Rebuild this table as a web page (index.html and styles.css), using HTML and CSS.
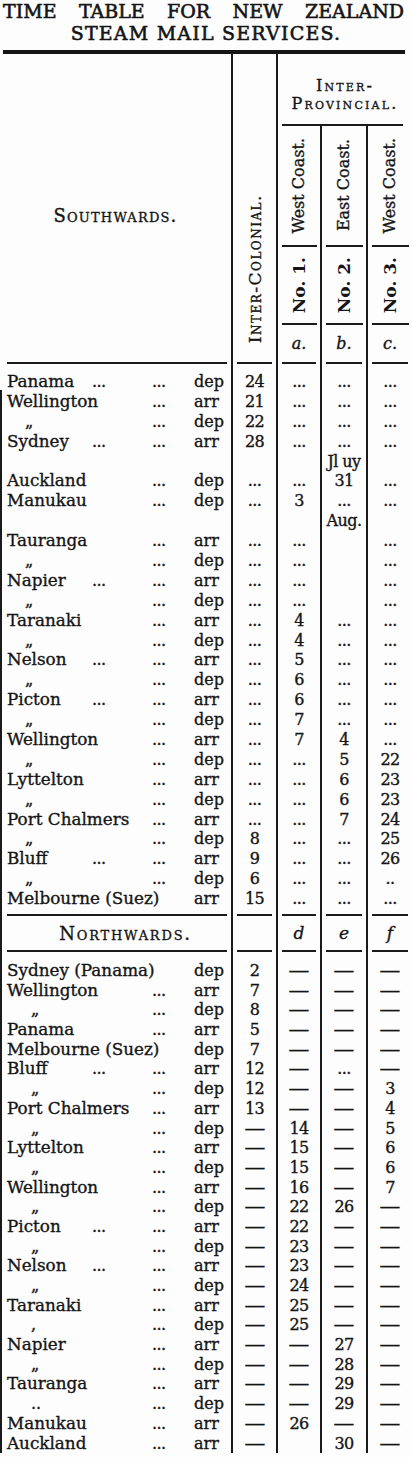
FILE: index.html
```html
<!DOCTYPE html>
<html lang="en">
<head>
<meta charset="utf-8">
<title>Time Table for New Zealand Steam Mail Services</title>
<link rel="stylesheet" href="styles.css">
</head>
<body>
<div class="page">
  <div class="title">
    <div class="title-l1"><span>TIME</span><span>TABLE</span><span>FOR</span><span>NEW</span><span>ZEALAND</span></div>
    <div class="title-l2">STEAM MAIL SERVICES.</div>
  </div>
  <div class="rule-thick"></div>

  <div class="thead">
    <div class="th-names"><span class="sc south">Southwards.</span></div>
    <div class="th-ic"><span class="vert sc ic">Inter-Colonial.</span></div>
    <div class="th-group sc"><span>Inter-</span><span>Provincial.</span></div>
    <div class="th-grule"><i class="hr"></i></div>
    <div class="th-cell c3 r3"><span class="vert coast">West Coast.</span></div>
    <div class="th-cell c4 r3"><span class="vert coast">East Coast.</span></div>
    <div class="th-cell c5 r3"><span class="vert coast">West Coast.</span></div>
    <div class="th-cell c3 r4"><i class="hr"></i></div>
    <div class="th-cell c4 r4"><i class="hr"></i></div>
    <div class="th-cell c5 r4"><i class="hr"></i></div>
    <div class="th-cell c3 r5"><span class="vert no">No. 1.</span></div>
    <div class="th-cell c4 r5"><span class="vert no">No. 2.</span></div>
    <div class="th-cell c5 r5"><span class="vert no">No. 3.</span></div>
    <div class="th-cell c3 r6"><i class="hr"></i></div>
    <div class="th-cell c4 r6"><i class="hr"></i></div>
    <div class="th-cell c5 r6"><i class="hr"></i></div>
    <div class="th-cell c3 r7 it">a.</div>
    <div class="th-cell c4 r7 it">b.</div>
    <div class="th-cell c5 r7 it">c.</div>
  </div>

  <div class="tbody">
    <div class="rule"><i></i><i></i><i></i><i></i><i></i></div>

    <div class="sec sec-south">
      <div class="r"><div class="n">Panama</div><div class="d2">...</div><div class="d3">...</div><div class="dir">dep</div><div class="c">24</div><div class="c">...</div><div class="c">...</div><div class="c">...</div></div>
      <div class="r"><div class="n">Wellington</div><div class="d2"></div><div class="d3">...</div><div class="dir">arr</div><div class="c">21</div><div class="c">...</div><div class="c">...</div><div class="c">...</div></div>
      <div class="r"><div class="n"><span class="ditto">„</span></div><div class="d2"></div><div class="d3">...</div><div class="dir">dep</div><div class="c">22</div><div class="c">...</div><div class="c">...</div><div class="c">...</div></div>
      <div class="r"><div class="n">Sydney</div><div class="d2">...</div><div class="d3">...</div><div class="dir">arr</div><div class="c">28</div><div class="c">...</div><div class="c">...</div><div class="c">...</div></div>
      <div class="r"><div class="n"></div><div class="d2"></div><div class="d3"></div><div class="dir"></div><div class="c"></div><div class="c"></div><div class="c">Jl uy</div><div class="c"></div></div>
      <div class="r"><div class="n">Auckland</div><div class="d2"></div><div class="d3">...</div><div class="dir">dep</div><div class="c">...</div><div class="c">...</div><div class="c">31</div><div class="c">...</div></div>
      <div class="r"><div class="n">Manukau</div><div class="d2"></div><div class="d3">...</div><div class="dir">dep</div><div class="c">...</div><div class="c">3</div><div class="c">...</div><div class="c">...</div></div>
      <div class="r"><div class="n"></div><div class="d2"></div><div class="d3"></div><div class="dir"></div><div class="c"></div><div class="c"></div><div class="c">Aug.</div><div class="c"></div></div>
      <div class="r"><div class="n">Tauranga</div><div class="d2"></div><div class="d3">...</div><div class="dir">arr</div><div class="c">...</div><div class="c">...</div><div class="c"></div><div class="c">...</div></div>
      <div class="r"><div class="n"><span class="ditto">„</span></div><div class="d2"></div><div class="d3">...</div><div class="dir">dep</div><div class="c">...</div><div class="c">...</div><div class="c"></div><div class="c">...</div></div>
      <div class="r"><div class="n">Napier</div><div class="d2">...</div><div class="d3">...</div><div class="dir">arr</div><div class="c">...</div><div class="c">...</div><div class="c"></div><div class="c">...</div></div>
      <div class="r"><div class="n"><span class="ditto">„</span></div><div class="d2"></div><div class="d3">...</div><div class="dir">dep</div><div class="c">...</div><div class="c">...</div><div class="c"></div><div class="c">...</div></div>
      <div class="r"><div class="n">Taranaki</div><div class="d2"></div><div class="d3">...</div><div class="dir">arr</div><div class="c">...</div><div class="c">4</div><div class="c">...</div><div class="c">...</div></div>
      <div class="r"><div class="n"><span class="ditto">„</span></div><div class="d2"></div><div class="d3">...</div><div class="dir">dep</div><div class="c">...</div><div class="c">4</div><div class="c">...</div><div class="c">...</div></div>
      <div class="r"><div class="n">Nelson</div><div class="d2">...</div><div class="d3">...</div><div class="dir">arr</div><div class="c">...</div><div class="c">5</div><div class="c">...</div><div class="c">...</div></div>
      <div class="r"><div class="n"><span class="ditto">„</span></div><div class="d2"></div><div class="d3">...</div><div class="dir">dep</div><div class="c">...</div><div class="c">6</div><div class="c">...</div><div class="c">...</div></div>
      <div class="r"><div class="n">Picton</div><div class="d2">...</div><div class="d3">...</div><div class="dir">arr</div><div class="c">...</div><div class="c">6</div><div class="c">...</div><div class="c">...</div></div>
      <div class="r"><div class="n"><span class="ditto">„</span></div><div class="d2"></div><div class="d3">...</div><div class="dir">dep</div><div class="c">...</div><div class="c">7</div><div class="c">...</div><div class="c">...</div></div>
      <div class="r"><div class="n">Wellington</div><div class="d2"></div><div class="d3">...</div><div class="dir">arr</div><div class="c">...</div><div class="c">7</div><div class="c">4</div><div class="c">...</div></div>
      <div class="r"><div class="n"><span class="ditto">„</span></div><div class="d2"></div><div class="d3">...</div><div class="dir">dep</div><div class="c">...</div><div class="c">...</div><div class="c">5</div><div class="c">22</div></div>
      <div class="r"><div class="n">Lyttelton</div><div class="d2"></div><div class="d3">...</div><div class="dir">arr</div><div class="c">...</div><div class="c">...</div><div class="c">6</div><div class="c">23</div></div>
      <div class="r"><div class="n"><span class="ditto">„</span></div><div class="d2"></div><div class="d3">...</div><div class="dir">dep</div><div class="c">...</div><div class="c">...</div><div class="c">6</div><div class="c">23</div></div>
      <div class="r"><div class="n">Port Chalmers</div><div class="d2"></div><div class="d3">...</div><div class="dir">arr</div><div class="c">...</div><div class="c">...</div><div class="c">7</div><div class="c">24</div></div>
      <div class="r"><div class="n"><span class="ditto">„</span></div><div class="d2"></div><div class="d3">...</div><div class="dir">dep</div><div class="c">8</div><div class="c">...</div><div class="c">...</div><div class="c">25</div></div>
      <div class="r"><div class="n">Bluff</div><div class="d2">...</div><div class="d3">...</div><div class="dir">arr</div><div class="c">9</div><div class="c">...</div><div class="c">...</div><div class="c">26</div></div>
      <div class="r"><div class="n"><span class="ditto">„</span></div><div class="d2"></div><div class="d3">...</div><div class="dir">dep</div><div class="c">6</div><div class="c">...</div><div class="c">...</div><div class="c">..</div></div>
      <div class="r"><div class="n">Melbourne (Suez)</div><div class="d2"></div><div class="d3"></div><div class="dir">arr</div><div class="c">15</div><div class="c">...</div><div class="c">...</div><div class="c">...</div></div>
    </div>

    <div class="rule"><i></i><i></i><i></i><i></i><i></i></div>
    <div class="nh">
      <div class="nh-name"><span class="sc north">Northwards.</span></div>
      <div class="nh-c"></div>
      <div class="nh-c it">d</div>
      <div class="nh-c it">e</div>
      <div class="nh-c it">f</div>
    </div>
    <div class="rule"><i></i><i></i><i></i><i></i><i></i></div>

    <div class="sec sec-north">
      <div class="r"><div class="n">Sydney (Panama)</div><div class="d2"></div><div class="d3"></div><div class="dir">dep</div><div class="c">2</div><div class="c"><span class="dash">—</span></div><div class="c"><span class="dash">—</span></div><div class="c"><span class="dash">—</span></div></div>
      <div class="r"><div class="n">Wellington</div><div class="d2"></div><div class="d3">...</div><div class="dir">arr</div><div class="c">7</div><div class="c"><span class="dash">—</span></div><div class="c"><span class="dash">—</span></div><div class="c"><span class="dash">—</span></div></div>
      <div class="r"><div class="n"><span class="ditto dn">„</span></div><div class="d2"></div><div class="d3">...</div><div class="dir">dep</div><div class="c">8</div><div class="c"><span class="dash">—</span></div><div class="c"><span class="dash">—</span></div><div class="c"><span class="dash">—</span></div></div>
      <div class="r"><div class="n">Panama</div><div class="d2"></div><div class="d3">...</div><div class="dir">arr</div><div class="c">5</div><div class="c"><span class="dash">—</span></div><div class="c"><span class="dash">—</span></div><div class="c"><span class="dash">—</span></div></div>
      <div class="r"><div class="n">Melbourne (Suez)</div><div class="d2"></div><div class="d3"></div><div class="dir">dep</div><div class="c">7</div><div class="c"><span class="dash">—</span></div><div class="c"><span class="dash">—</span></div><div class="c"><span class="dash">—</span></div></div>
      <div class="r"><div class="n">Bluff</div><div class="d2">...</div><div class="d3">...</div><div class="dir">arr</div><div class="c">12</div><div class="c"><span class="dash">—</span></div><div class="c">...</div><div class="c"><span class="dash">—</span></div></div>
      <div class="r"><div class="n"><span class="ditto dn">„</span></div><div class="d2"></div><div class="d3">...</div><div class="dir">dep</div><div class="c">12</div><div class="c"><span class="dash">—</span></div><div class="c"><span class="dash">—</span></div><div class="c">3</div></div>
      <div class="r"><div class="n">Port Chalmers</div><div class="d2"></div><div class="d3">...</div><div class="dir">arr</div><div class="c">13</div><div class="c"><span class="dash">—</span></div><div class="c"><span class="dash">—</span></div><div class="c">4</div></div>
      <div class="r"><div class="n"><span class="ditto dn">„</span></div><div class="d2"></div><div class="d3">...</div><div class="dir">dep</div><div class="c"><span class="dash">—</span></div><div class="c">14</div><div class="c"><span class="dash">—</span></div><div class="c">5</div></div>
      <div class="r"><div class="n">Lyttelton</div><div class="d2"></div><div class="d3">...</div><div class="dir">arr</div><div class="c"><span class="dash">—</span></div><div class="c">15</div><div class="c"><span class="dash">—</span></div><div class="c">6</div></div>
      <div class="r"><div class="n"><span class="ditto dn">„</span></div><div class="d2"></div><div class="d3">...</div><div class="dir">dep</div><div class="c"><span class="dash">—</span></div><div class="c">15</div><div class="c"><span class="dash">—</span></div><div class="c">6</div></div>
      <div class="r"><div class="n">Wellington</div><div class="d2"></div><div class="d3">...</div><div class="dir">arr</div><div class="c"><span class="dash">—</span></div><div class="c">16</div><div class="c"><span class="dash">—</span></div><div class="c">7</div></div>
      <div class="r"><div class="n"><span class="ditto dn">„</span></div><div class="d2"></div><div class="d3">...</div><div class="dir">dep</div><div class="c"><span class="dash">—</span></div><div class="c">22</div><div class="c">26</div><div class="c"><span class="dash">—</span></div></div>
      <div class="r"><div class="n">Picton</div><div class="d2">...</div><div class="d3">...</div><div class="dir">arr</div><div class="c"><span class="dash">—</span></div><div class="c">22</div><div class="c"><span class="dash">—</span></div><div class="c"><span class="dash">—</span></div></div>
      <div class="r"><div class="n"><span class="ditto dn">„</span></div><div class="d2"></div><div class="d3">...</div><div class="dir">dep</div><div class="c"><span class="dash">—</span></div><div class="c">23</div><div class="c"><span class="dash">—</span></div><div class="c"><span class="dash">—</span></div></div>
      <div class="r"><div class="n">Nelson</div><div class="d2">...</div><div class="d3">...</div><div class="dir">arr</div><div class="c"><span class="dash">—</span></div><div class="c">23</div><div class="c"><span class="dash">—</span></div><div class="c"><span class="dash">—</span></div></div>
      <div class="r"><div class="n"><span class="ditto dn">„</span></div><div class="d2"></div><div class="d3">...</div><div class="dir">dep</div><div class="c"><span class="dash">—</span></div><div class="c">24</div><div class="c"><span class="dash">—</span></div><div class="c"><span class="dash">—</span></div></div>
      <div class="r"><div class="n">Taranaki</div><div class="d2"></div><div class="d3">...</div><div class="dir">arr</div><div class="c"><span class="dash">—</span></div><div class="c">25</div><div class="c"><span class="dash">—</span></div><div class="c"><span class="dash">—</span></div></div>
      <div class="r"><div class="n"><span class="ditto dn">,</span></div><div class="d2"></div><div class="d3">...</div><div class="dir">dep</div><div class="c"><span class="dash">—</span></div><div class="c">25</div><div class="c"><span class="dash">—</span></div><div class="c"><span class="dash">—</span></div></div>
      <div class="r"><div class="n">Napier</div><div class="d2"></div><div class="d3">...</div><div class="dir">arr</div><div class="c"><span class="dash">—</span></div><div class="c"><span class="dash">—</span></div><div class="c">27</div><div class="c"><span class="dash">—</span></div></div>
      <div class="r"><div class="n"><span class="ditto dn">„</span></div><div class="d2"></div><div class="d3">...</div><div class="dir">dep</div><div class="c"><span class="dash">—</span></div><div class="c"><span class="dash">—</span></div><div class="c">28</div><div class="c"><span class="dash">—</span></div></div>
      <div class="r"><div class="n">Tauranga</div><div class="d2"></div><div class="d3">...</div><div class="dir">arr</div><div class="c"><span class="dash">—</span></div><div class="c"><span class="dash">—</span></div><div class="c">29</div><div class="c"><span class="dash">—</span></div></div>
      <div class="r"><div class="n"><span class="ditto dn">..</span></div><div class="d2"></div><div class="d3">...</div><div class="dir">dep</div><div class="c"><span class="dash">—</span></div><div class="c"><span class="dash">—</span></div><div class="c">29</div><div class="c"><span class="dash">—</span></div></div>
      <div class="r"><div class="n">Manukau</div><div class="d2"></div><div class="d3">...</div><div class="dir">arr</div><div class="c"><span class="dash">—</span></div><div class="c">26</div><div class="c"><span class="dash">—</span></div><div class="c"><span class="dash">—</span></div></div>
      <div class="r"><div class="n">Auckland</div><div class="d2"></div><div class="d3">...</div><div class="dir">arr</div><div class="c"><span class="dash">—</span></div><div class="c"></div><div class="c">30</div><div class="c"><span class="dash">—</span></div></div>
    </div>
  </div>
</div>
</body>
</html>
```

FILE: styles.css
```css
* {
  box-sizing: border-box;
  margin: 0;
  padding: 0;
}

html,
body {
  background: #fdfdfd;
}

body {
  width: 412px;
  font-family: "DejaVu Serif", "Liberation Serif", serif;
  font-size: 16px;
  color: #151515;
  -webkit-text-stroke: 0.35px #151515;
}

.page {
  width: 412px;
}

/* ---------- title ---------- */
.title {
  height: 50px;
  font-size: 19px;
  line-height: 22.2px;
  -webkit-text-stroke: 0.6px #151515;
}

.title-l1 {
  display: flex;
  justify-content: space-between;
  padding: 0 8px 0 3px;
}

.title-l2 {
  text-align: center;
  letter-spacing: 1.2px;
}

.rule-thick {
  height: 4px;
  margin: 0 7px 0 3px;
  background: #151515;
}

/* ---------- shared ---------- */
.sc {
  font-variant: small-caps;
}

.it {
  font-style: italic;
}

.vert {
  writing-mode: vertical-rl;
  transform: rotate(180deg);
  white-space: nowrap;
}

.hr {
  display: block;
  height: 2px;
  background: #1a1a1a;
}

/* ---------- table head ---------- */
.thead {
  display: grid;
  grid-template-columns: 231px 45px 44px 46px 46px;
  grid-template-rows: 70px 2px 119px 2px 76px 2px 37px;
}

.th-names {
  grid-column: 1;
  grid-row: 1 / -1;
  display: flex;
  align-items: center;
  justify-content: center;
  padding-top: 14px;
}

.south {
  font-size: 18px;
  letter-spacing: 1.2px;
}

.th-ic {
  grid-column: 2;
  grid-row: 1 / -1;
  border-left: 2px solid #1a1a1a;
  display: flex;
  align-items: flex-end;
  justify-content: center;
  padding-bottom: 19px;
}

.ic {
  font-size: 17px;
  letter-spacing: 1.5px;
  line-height: 18px;
}

.th-group {
  grid-column: 3 / 6;
  grid-row: 1;
  border-left: 2px solid #1a1a1a;
  display: flex;
  flex-direction: column;
  justify-content: flex-end;
  align-items: center;
  padding-bottom: 10px;
  font-size: 16px;
  line-height: 18.7px;
  letter-spacing: 2.2px;
}

.th-grule {
  grid-column: 3 / 6;
  grid-row: 2;
  border-left: 2px solid #1a1a1a;
  padding: 0 9px 0 4px;
}

.th-cell {
  border-left: 2px solid #1a1a1a;
  display: flex;
  align-items: center;
  justify-content: center;
}

.th-cell .hr {
  width: 100%;
  margin: 0 3px 0 4px;
}

.c3 { grid-column: 3; }
.c4 { grid-column: 4; }
.c5 { grid-column: 5; }
.r3 { grid-row: 3; }
.r4 { grid-row: 4; }
.r5 { grid-row: 5; }
.r6 { grid-row: 6; }
.r7 { grid-row: 7; }

.coast {
  font-size: 16px;
  line-height: 18px;
}

.no {
  font-size: 17px;
  line-height: 18px;
  font-weight: bold;
  -webkit-text-stroke: 0;
}

.r7 {
  font-size: 16px;
}

/* ---------- table body ---------- */
.tbody {
  background:
    linear-gradient(#1a1a1a, #1a1a1a) 0 28px / 2px 100% no-repeat,
    linear-gradient(#1a1a1a, #1a1a1a) 231px 0 / 2px 100% no-repeat,
    linear-gradient(#1a1a1a, #1a1a1a) 276px 0 / 2px 100% no-repeat,
    linear-gradient(#1a1a1a, #1a1a1a) 320px 0 / 2px 100% no-repeat,
    linear-gradient(#1a1a1a, #1a1a1a) 366px 0 / 2px 100% no-repeat;
}

.rule {
  display: grid;
  grid-template-columns: 231px 45px 44px 46px 46px;
  height: 2px;
}

.rule i {
  display: block;
  height: 2px;
  background: #1a1a1a;
  margin: 0 4px 0 6px;
}

.rule i:first-child {
  margin: 0 4px 0 7px;
}

.sec-south {
  padding: 8px 0 5px;
}

.sec-north {
  padding: 9px 0 0;
}

.r {
  display: grid;
  grid-template-columns: 92px 60px 41px 38px 45px 44px 46px 46px;
  height: 19.9px;
  line-height: 19.9px;
  white-space: nowrap;
}

.sec-north .r {
  height: 19.7px;
  line-height: 19.7px;
}

.n {
  padding-left: 7px;
  font-size: 16.8px;
}

.d2,
.d3,
.c {
  letter-spacing: -0.6px;
}

.dir {
  padding-left: 1px;
}

.c {
  text-align: center;
  padding-left: 2px;
}

.ditto {
  margin-left: 18px;
  font-size: 16px;
}

.ditto.dn {
  margin-left: 24px;
}

.dash {
  display: inline-block;
  font-size: 16px;
  letter-spacing: 0;
  transform: scaleX(1.3);
}

/* ---------- northwards header ---------- */
.nh {
  display: grid;
  grid-template-columns: 231px 45px 44px 46px 46px;
  height: 34px;
  align-items: center;
}

.nh-name {
  text-align: center;
  padding-left: 20px;
}

.north {
  font-size: 18px;
  letter-spacing: 1.8px;
}

.nh-c {
  text-align: center;
  padding-left: 2px;
  font-size: 17px;
}
```
